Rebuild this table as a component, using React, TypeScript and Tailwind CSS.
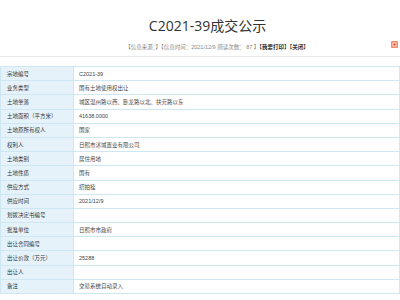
const rows: [string, string][] = [
  ["宗地编号", "C2021-39"],
  ["业务类型", "国有土地使用权出让"],
  ["土地坐落", "城区温州路以西、卧龙路以北、扶元路以东"],
  ["土地面积（平方米）", "41638.0000"],
  ["土地原所有权人", "国家"],
  ["权利人", "日照市沭城置业有限公司"],
  ["土地类别", "居住用地"],
  ["土地性质", "国有"],
  ["供应方式", "招拍挂"],
  ["供应时间", "2021/12/9"],
  ["划拨决定书编号", ""],
  ["批准单位", "日照市市政府"],
  ["出让合同编号", ""],
  ["出让价款（万元）", "25288"],
  ["出让人", ""],
  ["备注", "交易系统自动录入"],
];

function PrintIcon() {
  return (
    <svg width="7" height="7" viewBox="0 0 7 7">
      <rect x="0" y="0" width="7" height="7" rx="1" fill="#f08a6a" />
      <rect x="1.5" y="1.5" width="4" height="4" fill="#fbe3d6" />
      <rect x="2.5" y="2.5" width="2" height="2" fill="#d9362b" />
    </svg>
  );
}

export default function App() {
  return (
    <div
      className="relative h-[300px] w-[400px] overflow-hidden bg-white"
      style={{ fontFamily: '"Liberation Sans", "Noto Sans CJK SC", sans-serif' }}
    >
      <div className="flex h-[37px] items-end justify-center pl-[15px] pb-[1px]">
        <h1
          className="text-[14px] leading-[20px] text-[#333]"
          style={{ fontFamily: '"Open Sans", "Noto Sans CJK SC", sans-serif' }}
        >
          C2021-39成交公示
        </h1>
      </div>
      <div className="relative flex h-[19px] items-center justify-center pl-[34px] text-[5.5px] leading-[8px] text-[#888]">
        <span>
          【信息来源：】【信息时间：2021/12/9 阅读次数： 87 】
          <span className="font-bold text-[#333]">【我要打印】【关闭】</span>
        </span>
        <span className="absolute right-[2px] top-[4px]">
          <PrintIcon />
        </span>
      </div>
      <div className="h-px bg-[#e8e8e8]" />
      <div className="h-[9px]" />
      <table className="w-[400px] border-collapse text-[5.5px] leading-[8px]">
        <tbody>
          {rows.map(([k, v]) => (
            <tr key={k} className="h-[14.2px]">
              <td className="w-[73px] border border-[#cfe6f3] bg-[#e6f2fa] pl-[6px] text-[#333]">
                {k}
              </td>
              <td className="border border-[#cfe6f3] pl-[5px] text-[#444]">{v}</td>
            </tr>
          ))}
        </tbody>
      </table>
    </div>
  );
}
